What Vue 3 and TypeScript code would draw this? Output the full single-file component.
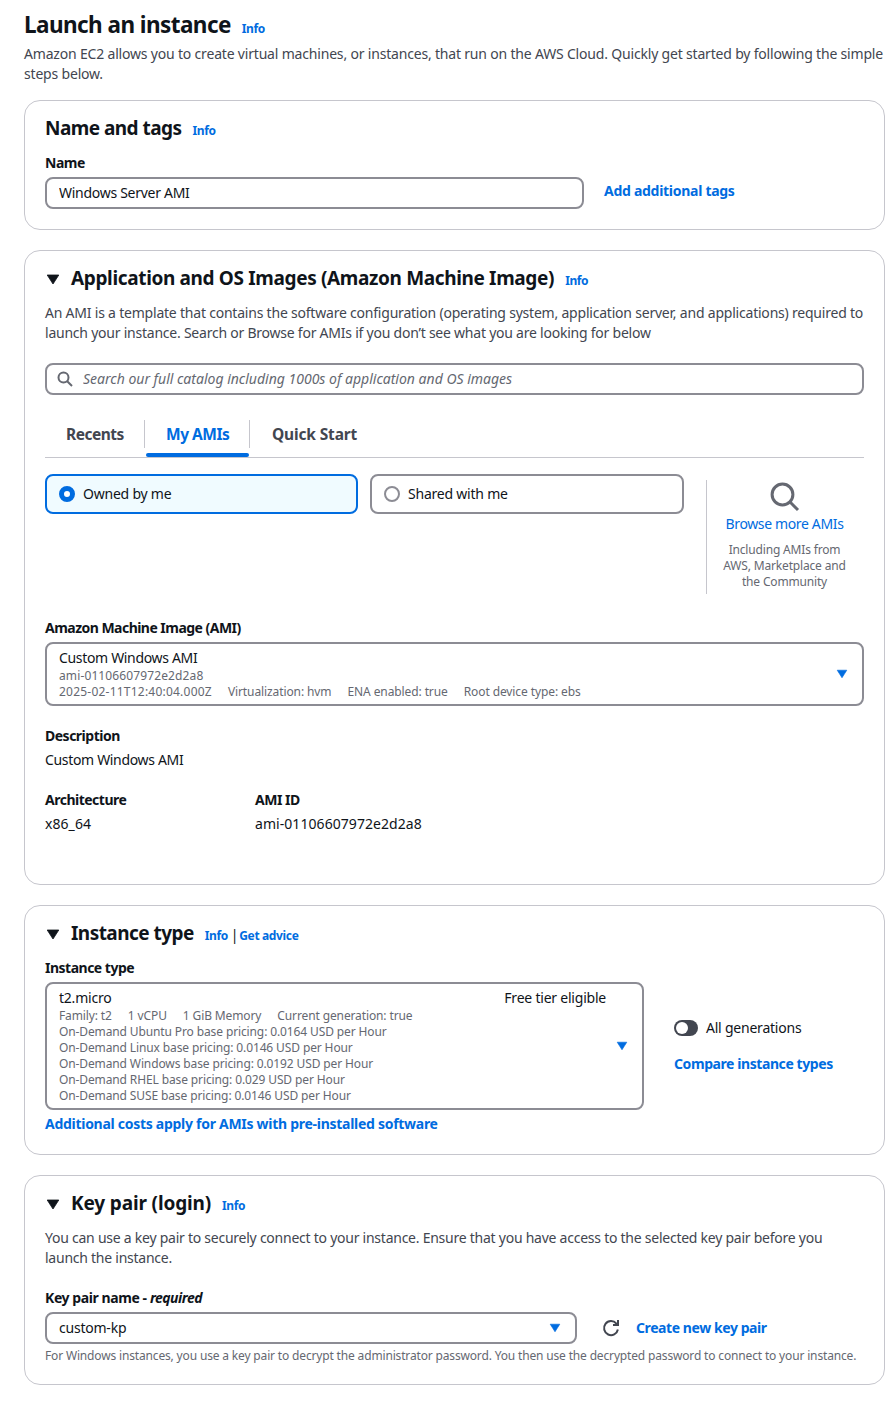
<script setup lang="ts">
import { ref } from 'vue'

const instanceName = ref('Windows Server AMI')
const search = ref('')

const amiMeta = ['2025-02-11T12:40:04.000Z', 'Virtualization: hvm', 'ENA enabled: true', 'Root device type: ebs']
const typeMeta = ['Family: t2', '1 vCPU', '1 GiB Memory', 'Current generation: true']
const pricing = [
  { os: 'Ubuntu Pro', price: '0.0164' },
  { os: 'Linux', price: '0.0146' },
  { os: 'Windows', price: '0.0192' },
  { os: 'RHEL', price: '0.029' },
  { os: 'SUSE', price: '0.0146' },
]
</script>

<template>
  <main class="page">
    <header class="page-head">
      <div class="title-row">
        <h1>Launch an instance</h1>
        <a class="info">Info</a>
      </div>
      <p class="lead wide">Amazon EC2 allows you to create virtual machines, or instances, that run on the AWS Cloud. Quickly get started by following the simple<br />steps below.</p>
    </header>

    <section class="card names">
      <div class="card-head">
        <h2 class="plain">Name and tags</h2>
        <a class="info">Info</a>
      </div>
      <label class="label">Name</label>
      <div class="name-row">
        <input v-model="instanceName" class="field name-field" />
        <a class="link tags">Add additional tags</a>
      </div>
    </section>

    <section class="card images">
      <div class="card-head">
        <svg class="caret" viewBox="0 0 14 11"><path d="M1.2 1h11.6L7 10z" /></svg>
        <h2>Application and OS Images (Amazon Machine Image)</h2>
        <a class="info">Info</a>
      </div>
      <p class="lead">An AMI is a template that contains the software configuration (operating system, application server, and applications) required to<br /><span class="lead-tail">launch your instance. Search or Browse for AMIs if you don’t see what you are looking for below</span></p>

      <div class="field search">
        <svg viewBox="0 0 16 16"><circle cx="6.5" cy="6.5" r="5" /><path d="M10.2 10.2 15 15" /></svg>
        <input v-model="search" placeholder="Search our full catalog including 1000s of application and OS images" />
      </div>

      <nav class="tabs">
        <a class="tab recents">Recents</a>
        <a class="tab active">My AMIs</a>
        <a class="tab quick">Quick Start</a>
      </nav>

      <div class="owners">
        <label class="tile selected"><i class="radio" />Owned by me</label>
        <label class="tile"><i class="radio" />Shared with me</label>
        <aside class="browse">
          <svg viewBox="0 0 30 32"><circle cx="12.5" cy="13.5" r="10.4" /><path d="m20 21 8 8" /></svg>
          <a>Browse more AMIs</a>
          <p>Including AMIs from<br />AWS, Marketplace and<br />the Community</p>
        </aside>
      </div>

      <label class="label ami-label">Amazon Machine Image (AMI)</label>
      <div class="field select ami-select">
        <div class="select-body">
          <div class="value tight">Custom Windows AMI</div>
          <div class="meta"><span class="digits">ami-01106607972e2d2a8</span></div>
          <div class="meta ami-meta"><span v-for="(m, i) in amiMeta" :key="m" :class="{ stamp: i === 0 }">{{ m }}</span></div>
        </div>
        <svg class="drop" viewBox="0 0 12 10"><path d="M1.2 1.2h9.6L6 8.8z" /></svg>
      </div>

      <dl class="facts">
        <div class="fact full"><dt>Description</dt><dd class="tight">Custom Windows AMI</dd></div>
        <div class="fact"><dt>Architecture</dt><dd class="id">x86_64</dd></div>
        <div class="fact"><dt>AMI ID</dt><dd class="id">ami-01106607972e2d2a8</dd></div>
      </dl>
    </section>

    <section class="card types">
      <div class="card-head">
        <svg class="caret" viewBox="0 0 14 11"><path d="M1.2 1h11.6L7 10z" /></svg>
        <h2 class="plain">Instance type</h2>
        <a class="info">Info</a><span class="bar">|</span><a class="info advice">Get advice</a>
      </div>
      <div class="type-row">
        <div class="type-main">
          <label class="label">Instance type</label>
          <div class="field select type-select">
            <div class="select-body">
              <div class="value split"><span>t2.micro</span><span>Free tier eligible</span></div>
              <div class="meta"><span v-for="m in typeMeta" :key="m">{{ m }}</span></div>
              <div v-for="p in pricing" :key="p.os" class="meta">On-Demand {{ p.os }} base pricing: {{ p.price }} USD per Hour</div>
            </div>
            <svg class="drop" viewBox="0 0 12 10"><path d="M1.2 1.2h9.6L6 8.8z" /></svg>
          </div>
        </div>
        <div class="type-side">
          <div class="toggle-row"><i class="toggle" />All generations</div>
          <a class="link compare">Compare instance types</a>
        </div>
      </div>
      <a class="link costs">Additional costs apply for AMIs with pre-installed software</a>
    </section>

    <section class="card keys">
      <div class="card-head">
        <svg class="caret" viewBox="0 0 14 11"><path d="M1.2 1h11.6L7 10z" /></svg>
        <h2 class="key-title">Key pair (login)</h2>
        <a class="info">Info</a>
      </div>
      <p class="lead key-lead">You can use a key pair to securely connect to your instance. Ensure that you have access to the selected key pair before you<br />launch the instance.</p>
      <label class="label key-label">Key pair name - <em>required</em></label>
      <div class="key-row">
        <div class="field select key-select">
          <div class="value">custom-kp</div>
          <svg class="drop" viewBox="0 0 12 10"><path d="M1.2 1.2h9.6L6 8.8z" /></svg>
        </div>
        <svg class="refresh" viewBox="0 0 16 16"><path d="M14.9 9.5A7 7 0 1 1 13.4 3.6L14.5 5M15 0v5h-5" /></svg>
        <a class="link create">Create new key pair</a>
      </div>
      <p class="hint">For Windows instances, you use a key pair to decrypt the administrator password. You then use the decrypted password to connect to your instance.</p>
    </section>
  </main>
</template>

<style>
body {
  background: #fff;
}
</style>

<style scoped>
* {
  box-sizing: border-box;
}
.page {
  width: 890px;
  height: 1403px;
  padding: 10px 5px 0 24px;
  overflow: hidden;
  display: flex;
  flex-direction: column;
  color: #0f141a;
  font: 400 14px/20px "Noto Sans", "Open Sans", sans-serif;
  letter-spacing: -0.22px;
  white-space: nowrap;
}
h1,
h2,
p,
dl,
dd {
  margin: 0;
}
h1 {
  font-size: 22.5px;
  line-height: 30px;
  font-weight: 700;
  letter-spacing: -0.56px;
}
.page-head {
  height: 90px;
  flex: none;
}
.title-row,
.card-head {
  display: flex;
  align-items: baseline;
}
.title-row {
  height: 34px;
}
.info {
  margin-left: 11px;
  font-size: 12px;
  line-height: 16px;
  font-weight: 700;
  letter-spacing: -0.4px;
  color: #006ce0;
}
.lead {
  color: #424650;
  letter-spacing: -0.212px;
}
.lead-tail {
  letter-spacing: -0.232px;
}
.wide {
  letter-spacing: -0.185px;
}
.card {
  border: 1px solid #c6c6cd;
  border-radius: 16px;
  padding: 15px 20px 0;
  margin-bottom: 20px;
  flex: none;
}
.names {
  height: 130px;
}
.images {
  height: 635px;
}
.types {
  height: 250px;
}
.keys {
  height: 210px;
}
.card-head {
  height: 37px;
}
h2 {
  font-size: 19px;
  line-height: 24px;
  font-weight: 700;
  letter-spacing: -0.35px;
}
.plain {
  letter-spacing: -0.54px;
}
.key-title {
  letter-spacing: -0.14px;
}
.caret {
  width: 14px;
  height: 11px;
  margin: 0 11px 0 1px;
  fill: #0f141a;
  stroke: #0f141a;
  stroke-width: 0.8;
  stroke-linejoin: round;
}
.label,
dt {
  display: block;
  font-weight: 700;
  letter-spacing: -0.5px;
}
.field {
  border: 2px solid #8c8c94;
  border-radius: 8px;
  background: #fff;
}
.name-row,
.key-row {
  display: flex;
  align-items: center;
}
.name-row {
  margin-top: 4px;
}
.name-field {
  width: 539px;
  height: 32px;
  padding: 0 12px 1px;
  font: inherit;
  letter-spacing: -0.28px;
  color: inherit;
  outline: 0;
}
.link {
  font-weight: 700;
  letter-spacing: -0.28px;
  color: #006ce0;
}
.tags {
  margin: -4px 0 0 20px;
}
.search {
  margin-top: 20px;
  height: 32px;
  display: flex;
  align-items: center;
  padding: 0 10px;
}
.search svg {
  width: 16px;
  height: 16px;
  fill: none;
  stroke: #656871;
  stroke-width: 2;
}
.search input {
  flex: 1;
  border: 0;
  outline: 0;
  padding: 0 0 0 10px;
  font: inherit;
  letter-spacing: 0;
  background: transparent;
}
.search input::placeholder {
  color: #656871;
  font-style: italic;
  opacity: 1;
}
.tabs {
  display: flex;
  height: 38px;
  margin-top: 25px;
  border-bottom: 1px solid #c6c6cd;
}
.tab {
  position: relative;
  height: 28px;
  padding: 0 20px 0 21px;
  line-height: 28px;
  font-size: 15.5px;
  font-weight: 700;
  letter-spacing: -0.48px;
  color: #424650;
  border-right: 1px solid #c6c6cd;
}
.recents {
  width: 100px;
}
.active {
  width: 105px;
  color: #006ce0;
}
.active::after {
  content: '';
  position: absolute;
  left: 1px;
  right: 0;
  bottom: -9px;
  height: 4px;
  border-radius: 2px;
  background: #006ce0;
}
.quick {
  border: 0;
  padding-left: 22px;
  letter-spacing: -0.15px;
}
.owners {
  display: flex;
  align-items: flex-start;
  height: 160px;
  padding-top: 16px;
}
.tile {
  display: flex;
  align-items: center;
  width: 313px;
  height: 40px;
  padding-left: 12px;
  margin-right: 12px;
  border: 2px solid #8c8c94;
  border-radius: 8px;
}
.tile + .tile {
  width: 314px;
  margin-right: 22px;
}
.selected {
  background: #f0fbff;
  border-color: #006ce0;
}
.radio {
  width: 16px;
  height: 16px;
  margin-right: 8px;
  border: 2px solid #8c8c94;
  border-radius: 50%;
  background: #fff;
}
.selected .radio {
  border: 5px solid #006ce0;
}
.browse {
  display: flex;
  flex-direction: column;
  align-items: center;
  width: 156px;
  height: 114px;
  margin-top: 6px;
  padding-top: 1px;
  border-left: 1px solid #c6c6cd;
}
.browse svg {
  width: 30px;
  height: 32px;
  fill: none;
  stroke: #656871;
  stroke-width: 3;
}
.browse a {
  margin-top: 1px;
  color: #006ce0;
  letter-spacing: -0.36px;
}
.browse p {
  margin-top: 8px;
  font-size: 12px;
  line-height: 16px;
  text-align: center;
  letter-spacing: -0.17px;
  color: #656871;
}
.ami-label {
  letter-spacing: -0.53px;
}
.select {
  display: flex;
  align-items: center;
  padding: 0 14px 0 12px;
}
.select-body,
.select > .value {
  flex: 1;
}
.ami-select {
  height: 64px;
  margin-top: 4px;
}
.tight {
  letter-spacing: -0.33px;
}
.meta {
  display: flex;
  gap: 16px;
  font-size: 12px;
  line-height: 16px;
  letter-spacing: -0.12px;
  color: #656871;
}
.ami-meta {
  letter-spacing: -0.1px;
}
.digits {
  letter-spacing: 0.12px;
}
.stamp {
  letter-spacing: 0.22px;
}
.drop {
  width: 12px;
  height: 10px;
  fill: #006ce0;
  stroke: #006ce0;
  stroke-width: 0.6;
  stroke-linejoin: round;
}
.facts {
  display: flex;
  flex-wrap: wrap;
  margin-top: 20px;
}
.fact {
  width: 210px;
  height: 64px;
}
.full {
  width: 100%;
}
dd {
  margin-top: 4px;
}
.id {
  letter-spacing: 0.06px;
}
.bar {
  margin: 0 1px 0 3px;
}
.advice {
  margin-left: 0;
  letter-spacing: -0.36px;
}
.type-row {
  display: flex;
}
.type-select {
  width: 599px;
  height: 128px;
  margin-top: 4px;
}
.split {
  display: flex;
  justify-content: space-between;
  padding-right: 10px;
}
.type-side {
  margin: 60px 0 0 30px;
}
.toggle-row {
  display: flex;
  align-items: center;
  gap: 8px;
  margin-bottom: 16px;
}
.toggle {
  width: 24px;
  height: 16px;
  padding: 2px;
  border-radius: 8px;
  background: #424650;
}
.toggle::before {
  content: '';
  display: block;
  width: 12px;
  height: 12px;
  border-radius: 50%;
  background: #fff;
}
.compare {
  letter-spacing: -0.42px;
}
.costs {
  display: block;
  margin-top: 4px;
}
.key-lead {
  letter-spacing: -0.247px;
}
.key-label {
  margin-top: 20px;
  letter-spacing: -0.42px;
}
.key-label em {
  letter-spacing: -0.5px;
}
.key-row {
  margin-top: 4px;
}
.key-select {
  width: 532px;
  height: 32px;
}
.refresh {
  width: 16px;
  height: 16px;
  margin: 0 17px 0 26px;
  fill: none;
  stroke: #424650;
  stroke-width: 2;
  overflow: visible;
}
.create {
  letter-spacing: -0.42px;
}
.hint {
  margin-top: 4px;
  font-size: 12px;
  line-height: 16px;
  letter-spacing: -0.16px;
  color: #656871;
}
</style>
